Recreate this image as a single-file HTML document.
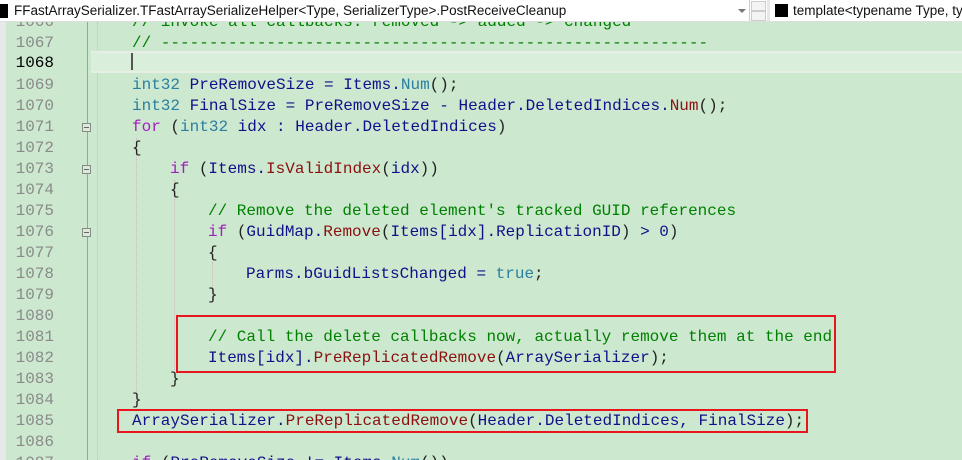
<!DOCTYPE html>
<html style="overflow:hidden;height:460px"><head><meta charset="utf-8"><style>
body{margin:0;width:962px;height:460px;overflow:hidden;background:#cce8cf;position:relative;font-family:"Liberation Mono",monospace;}
.hdr{position:absolute;left:0;top:0;width:962px;height:21px;overflow:hidden;background:#fff;border-bottom:1px solid #ddd;font-family:"Liberation Sans",sans-serif;font-size:13.5px;color:#111;}
.l{position:absolute;left:0;height:21px;line-height:21px;font-size:16px;white-space:pre;color:#10108a;}
.n{position:absolute;left:6px;width:48px;text-align:right;font-size:16px;line-height:21px;height:21px;color:#8a8a8a;}
.k{color:#a31ec0}.t{color:#2b7f9f}.f{color:#8b1010}.c{color:#008000}.p{color:#222}
.box{position:absolute;border:2px solid #e8141e;}
.fold{position:absolute;left:82px;width:7px;height:7px;border:1px solid #888;background:#d8ecd8;}
.fold:after{content:"";position:absolute;left:1px;top:3px;width:5px;height:1px;background:#666;}
</style></head><body>
<div style="position:absolute;left:0;top:22px;width:6px;height:438px;background:#e8e8e8"></div>
<div style="position:absolute;left:87px;top:22px;width:1px;height:438px;background:#a0a0a0"></div>
<div style="position:absolute;left:97px;top:22px;width:0;height:438px;border-left:1px dotted #d8b8c0"></div>
<div style="position:absolute;left:136px;top:138px;width:0;height:270px;border-left:1px dotted #d8b8c0"></div>
<div style="position:absolute;left:174px;top:180px;width:0;height:190px;border-left:1px dotted #d8b8c0"></div>
<div style="position:absolute;left:212px;top:262px;width:0;height:40px;border-left:1px dotted #d8b8c0"></div>
<div style="position:absolute;left:91px;top:51px;width:871px;height:18px;background:#d9eedb;border-top:2px solid #e6eee6;border-bottom:2px solid #e6eee6"></div>
<div style="position:absolute;left:131px;top:53px;width:2px;height:17px;background:#555"></div>

<div class="n" style="top:12px">1066</div><div class="l" style="top:12px;left:132px"><span class="c">// invoke all callbacks: removed -> added -> changed</span></div>
<div class="n" style="top:33px">1067</div><div class="l" style="top:33px;left:132px"><span class="c">// ---------------------------------------------------------</span></div>
<div class="n" style="top:53px;color:#000">1068</div>
<div class="n" style="top:75px">1069</div><div class="l" style="top:75px;left:132px"><span class="t">int32</span> PreRemoveSize = Items.<span class="t">Num</span><span class="p">();</span></div>
<div class="n" style="top:96px">1070</div><div class="l" style="top:96px;left:132px"><span class="t">int32</span> FinalSize = PreRemoveSize - Header.DeletedIndices.<span class="f">Num</span><span class="p">();</span></div>
<div class="n" style="top:117px">1071</div><div class="l" style="top:117px;left:132px"><span class="k">for</span> <span class="p">(</span><span class="t">int32</span> idx : Header.DeletedIndices<span class="p">)</span></div>
<div class="n" style="top:138px">1072</div><div class="l" style="top:138px;left:132px"><span class="p">{</span></div>
<div class="n" style="top:159px">1073</div><div class="l" style="top:159px;left:170px"><span class="k">if</span> <span class="p">(</span>Items.<span class="f">IsValidIndex</span><span class="p">(</span>idx<span class="p">))</span></div>
<div class="n" style="top:180px">1074</div><div class="l" style="top:180px;left:170px"><span class="p">{</span></div>
<div class="n" style="top:201px">1075</div><div class="l" style="top:201px;left:208px"><span class="c">// Remove the deleted element's tracked GUID references</span></div>
<div class="n" style="top:222px">1076</div><div class="l" style="top:222px;left:208px"><span class="k">if</span> <span class="p">(</span>GuidMap.<span class="f">Remove</span><span class="p">(</span>Items[idx].ReplicationID<span class="p">)</span> &gt; 0<span class="p">)</span></div>
<div class="n" style="top:243px">1077</div><div class="l" style="top:243px;left:208px"><span class="p">{</span></div>
<div class="n" style="top:264px">1078</div><div class="l" style="top:264px;left:246px">Parms.bGuidListsChanged = <span class="t">true</span><span class="p">;</span></div>
<div class="n" style="top:285px">1079</div><div class="l" style="top:285px;left:208px"><span class="p">}</span></div>
<div class="n" style="top:306px">1080</div>
<div class="n" style="top:327px">1081</div><div class="l" style="top:327px;left:208px"><span class="c">// Call the delete callbacks now, actually remove them at the end</span></div>
<div class="n" style="top:348px">1082</div><div class="l" style="top:348px;left:208px">Items[idx].<span class="f">PreReplicatedRemove</span><span class="p">(</span>ArraySerializer<span class="p">);</span></div>
<div class="n" style="top:369px">1083</div><div class="l" style="top:369px;left:170px"><span class="p">}</span></div>
<div class="n" style="top:390px">1084</div><div class="l" style="top:390px;left:132px"><span class="p">}</span></div>
<div class="n" style="top:411px">1085</div><div class="l" style="top:411px;left:132px">ArraySerializer.<span class="f">PreReplicatedRemove</span><span class="p">(</span>Header.DeletedIndices, FinalSize<span class="p">);</span></div>
<div class="n" style="top:432px">1086</div>
<div class="n" style="top:453px">1087</div><div class="l" style="top:453px;left:132px"><span class="k">if</span> <span class="p">(</span>PreRemoveSize != Items.<span class="t">Num</span><span class="p">())</span></div>

<div class="fold" style="top:123px"></div>
<div class="fold" style="top:165px"></div>
<div class="fold" style="top:228px"></div>

<div class="box" style="left:176px;top:315px;width:656px;height:54px"></div>
<div class="box" style="left:117px;top:409px;width:687px;height:20px"></div>

<div class="hdr">
<div style="position:absolute;left:0;top:4px;width:8px;height:14px;background:#000"></div>
<div style="position:absolute;left:14px;top:3px;">FFastArraySerializer.TFastArraySerializeHelper&lt;Type, SerializerType&gt;.PostReceiveCleanup</div>
<div style="position:absolute;left:738px;top:9px;width:0;height:0;border-left:4px solid transparent;border-right:4px solid transparent;border-top:4px solid #777"></div>
<div style="position:absolute;left:749px;top:0;width:1px;height:21px;background:#ccc"></div>
<div style="position:absolute;left:751px;top:1px;width:13px;height:8px;border:1px solid #ccc;background:#f4f4f4"></div>
<div style="position:absolute;left:751px;top:11px;width:13px;height:8px;border:1px solid #ccc;background:#f4f4f4"></div>
<div style="position:absolute;left:767px;top:0;width:3px;height:21px;background:#e8e8e8"></div>
<div style="position:absolute;left:775px;top:4px;width:13px;height:13px;background:#000"></div>
<div style="position:absolute;left:793px;top:3px;white-space:nowrap">template&lt;typename Type, typ</div>
</div>
</body></html>
